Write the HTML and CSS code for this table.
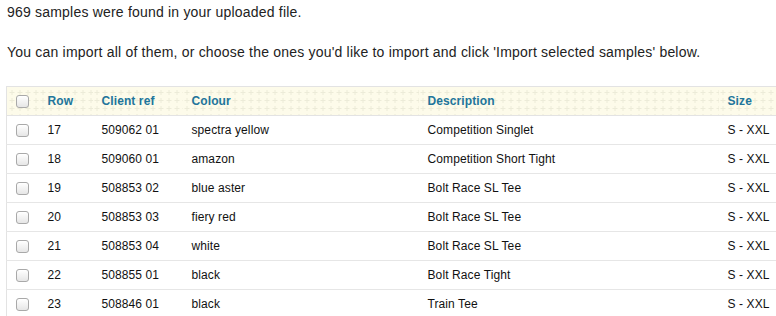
FILE: index.html
```html
<!DOCTYPE html>
<html>
<head>
<meta charset="utf-8">
<link rel="stylesheet" href="styles.css">
</head>
<body>
<div class="page">
  <p class="intro">969 samples were found in your uploaded file.</p>
  <p class="intro second">You can import all of them, or choose the ones you'd like to import and click 'Import selected samples' below.</p>
  <table class="samples">
    <colgroup>
      <col class="c-check"><col class="c-row"><col class="c-ref"><col class="c-colour"><col class="c-desc"><col class="c-size">
    </colgroup>
    <thead>
      <tr><th><span class="cb"></span></th><th>Row</th><th>Client ref</th><th>Colour</th><th>Description</th><th>Size</th></tr>
    </thead>
    <tbody>
      <tr><td><span class="cb"></span></td><td>17</td><td>509062 01</td><td>spectra yellow</td><td>Competition Singlet</td><td>S - XXL</td></tr>
      <tr><td><span class="cb"></span></td><td>18</td><td>509060 01</td><td>amazon</td><td>Competition Short Tight</td><td>S - XXL</td></tr>
      <tr><td><span class="cb"></span></td><td>19</td><td>508853 02</td><td>blue aster</td><td>Bolt Race SL Tee</td><td>S - XXL</td></tr>
      <tr><td><span class="cb"></span></td><td>20</td><td>508853 03</td><td>fiery red</td><td>Bolt Race SL Tee</td><td>S - XXL</td></tr>
      <tr><td><span class="cb"></span></td><td>21</td><td>508853 04</td><td>white</td><td>Bolt Race SL Tee</td><td>S - XXL</td></tr>
      <tr><td><span class="cb"></span></td><td>22</td><td>508855 01</td><td>black</td><td>Bolt Race Tight</td><td>S - XXL</td></tr>
      <tr><td><span class="cb"></span></td><td>23</td><td>508846 01</td><td>black</td><td>Train Tee</td><td>S - XXL</td></tr>
    </tbody>
  </table>
</div>
</body>
</html>
```
FILE: styles.css
```css
html, body {
  margin: 0;
  padding: 0;
  background: #fff;
  overflow: hidden;
}
.page {
  padding: 2px 0 0 6px;
  font-family: "Liberation Sans", Arial, sans-serif;
  color: #222;
}
.intro {
  margin: 0 0 0 1px;
  font-size: 14px;
  line-height: 20px;
  letter-spacing: 0.2px;
}
.intro.second {
  margin-top: 20px;
  margin-bottom: 24px;
}
.samples {
  border-collapse: collapse;
  table-layout: fixed;
  width: 770px;
  font-size: 12px;
  letter-spacing: 0.1px;
  border: 1px solid #e3e3e3;
  border-right: none;
}
.c-check { width: 32px; }
.c-row { width: 54px; }
.c-ref { width: 90px; }
.c-colour { width: 236px; }
.c-desc { width: 300px; }
.c-size { width: 58px; }
.samples th, .samples td {
  padding: 0 0 0 9px;
  height: 28px;
  text-align: left;
  vertical-align: middle;
  border-bottom: 1px solid #e6e6e6;
  white-space: nowrap;
  overflow: hidden;
}
.samples th {
  color: #21759b;
  font-weight: bold;
  background-color: #fdfbea;
  background-image: url("data:image/svg+xml,%3Csvg xmlns='http://www.w3.org/2000/svg' width='8' height='8'%3E%3Cpath d='M4 2v5M1.5 4.5h5' stroke='%23ecebd8' stroke-width='1'/%3E%3C/svg%3E");
  border-bottom: 1px solid #e3e3e3;
}
.samples td { color: #111; }
.cb {
  display: block;
  width: 11px;
  height: 11px;
  border: 1px solid #a9a9a9;
  border-radius: 3px;
  background: linear-gradient(#ffffff, #e6e6e6);
  box-shadow: inset 0 1px 0 #fff;
}
```
